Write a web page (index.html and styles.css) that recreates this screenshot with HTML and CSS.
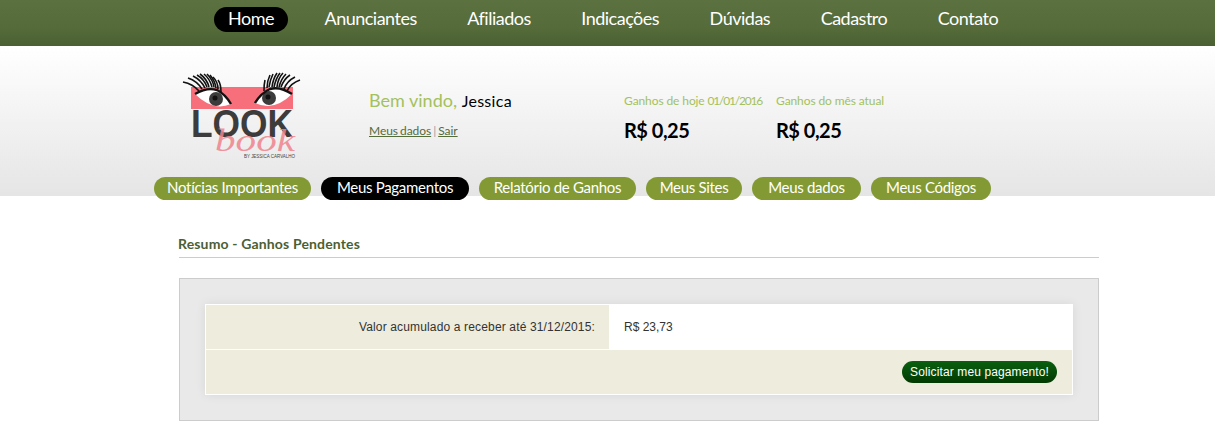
FILE: index.html
```html
<!DOCTYPE html>
<html lang="pt-BR">
<head>
    <meta charset="UTF-8">
    <title>Look Book - Meus Pagamentos</title>
    <link rel="stylesheet" href="styles.css">
</head>
<body>
    <nav class="top-nav">
        <a href="#" class="active">Home</a>
        <a href="#">Anunciantes</a>
        <a href="#">Afiliados</a>
        <a href="#">Indicações</a>
        <a href="#">Dúvidas</a>
        <a href="#">Cadastro</a>
        <a href="#">Contato</a>
    </nav>

    <header class="site-header">
        <div class="header-row">
            <svg class="logo" width="124" height="100" viewBox="0 0 124 100">
                <rect x="12" y="16" width="102" height="22" fill="#f76f7a"/>
                <!-- olhos -->
                <path d="M16 23 Q28 16 38 19 Q46 23 52 33 Q34 41 16 23Z" fill="#fff"/>
                <path d="M113 23 Q101 15 91 18 Q82 22 76 32 Q95 41 113 23Z" fill="#fff"/>
                <circle cx="37" cy="28" r="7" fill="#3c3c3c"/>
                <circle cx="90" cy="27" r="7" fill="#3c3c3c"/>
                <circle cx="36" cy="27" r="2.5" fill="#111"/>
                <circle cx="89" cy="26" r="2.5" fill="#111"/>
                <path d="M16 23 Q28 16 38 19 Q46 23 52 33" fill="none" stroke="#111" stroke-width="2.4"/>
                <path d="M113 23 Q101 15 91 18 Q82 22 76 32" fill="none" stroke="#111" stroke-width="2.4"/>
                <!-- cilios -->
                <g stroke="#111" stroke-width="1.6" fill="none">
                    <path d="M4 11 Q14 13 20 20"/><path d="M9 7 Q18 10 23 18"/><path d="M14 5 Q22 9 26 17"/><path d="M18 4 Q25 8 28 16"/><path d="M21 3 Q28 8 30 16"/><path d="M25 3 Q31 8 33 16"/><path d="M28 3 Q34 9 35 16"/><path d="M31 4 Q36 10 37 17"/><path d="M34 6 Q39 11 39 18"/><path d="M39 9 Q42 13 42 21"/>
                    <path d="M121 9 Q112 12 108 20"/><path d="M116 6 Q108 10 105 18"/><path d="M111 4 Q105 8 102 16"/><path d="M107 3 Q102 8 100 16"/><path d="M104 2 Q99 7 98 16"/><path d="M101 2 Q97 7 95 16"/><path d="M98 2 Q94 8 93 16"/><path d="M94 3 Q91 9 90 16"/><path d="M91 4 Q88 10 88 17"/><path d="M86 9 Q85 13 85 20"/>
                </g>
                <text x="12" y="66" class="logo-word" textLength="102" lengthAdjust="spacingAndGlyphs">LOOK</text>
                <text x="36" y="80" class="logo-script" textLength="80" lengthAdjust="spacingAndGlyphs">book</text>
                <text x="65" y="87" class="logo-by" textLength="51" lengthAdjust="spacingAndGlyphs">BY JESSICA CARVALHO</text>
            </svg>

            <div class="welcome">
                <p class="welcome-text">Bem vindo, <span>Jessica</span></p>
                <p class="welcome-links"><a href="#">Meus dados</a> | <a href="#">Sair</a></p>
            </div>

            <div class="earnings earnings-today">
                <p class="earnings-label">Ganhos de hoje <span class="earnings-date">01/01/2016</span></p>
                <p class="earnings-value">R$ 0,25</p>
            </div>
            <div class="earnings">
                <p class="earnings-label">Ganhos do mês atual</p>
                <p class="earnings-value">R$ 0,25</p>
            </div>
        </div>

        <div class="tabs">
            <a href="#">Notícias Importantes</a>
            <a href="#" class="active">Meus Pagamentos</a>
            <a href="#">Relatório de Ganhos</a>
            <a href="#">Meus Sites</a>
            <a href="#">Meus dados</a>
            <a href="#">Meus Códigos</a>
        </div>
    </header>

    <main class="content">
        <h2 class="section-title">Resumo - Ganhos Pendentes</h2>

        <div class="panel">
            <div class="summary">
                <div class="summary-row">
                    <div class="summary-label">Valor acumulado a receber até 31/12/2015:</div>
                    <div class="summary-value">R$ 23,73</div>
                </div>
                <div class="summary-action">
                    <button class="pay-btn">Solicitar meu pagamento!</button>
                </div>
            </div>
        </div>
    </main>
</body>
</html>
```

FILE: styles.css
```css
* {
    margin: 0;
    padding: 0;
    box-sizing: border-box;
}

body {
    font-family: Lato, "Open Sans", sans-serif;
    background: #fff;
    color: #000;
}

a {
    color: inherit;
}

.top-nav {
    height: 46px;
    padding: 7px 0 0 214px;
    display: flex;
    align-items: flex-start;
    gap: 22.5px;
    background: linear-gradient(to bottom, #5c7140 0%, #556b39 60%, #4b6033 100%);
}

.top-nav a {
    height: 25px;
    padding: 0 14px;
    line-height: 23px;
    border-radius: 13px;
    font-size: 18px;
    letter-spacing: -0.5px;
    color: #fff;
    text-decoration: none;
}

.top-nav a.active {
    background: #000;
}

.site-header {
    height: 150px;
    background: linear-gradient(to bottom, #fff 0%, #e5e5e5 100%);
}

.header-row {
    height: 131px;
    padding: 25px 0 0 179px;
    display: flex;
    align-items: flex-start;
}

.logo {
    width: 124px;
    height: 100px;
    flex-shrink: 0;
    overflow: visible;
}

.logo-word {
    font-family: "Liberation Sans", sans-serif;
    font-size: 39px;
    font-weight: bold;
    fill: #3c3c3c;
}

.logo-script {
    font-family: "Liberation Serif", serif;
    font-size: 32px;
    font-style: italic;
    fill: #f0828c;
    fill-opacity: 0.85;
}

.logo-by {
    font-family: "Liberation Sans", sans-serif;
    font-size: 5px;
    fill: #444;
}

.welcome {
    width: 255px;
    margin-left: 66px;
    padding-top: 18px;
}

.welcome-text {
    font-size: 18px;
    line-height: 22px;
    color: #a3c15c;
}

.welcome-text span {
    font-size: 16px;
    letter-spacing: 0.3px;
    color: #000;
}

.welcome-links {
    margin-top: 11px;
    font-size: 12px;
    letter-spacing: -0.05px;
    word-spacing: -1px;
    color: #a0a0a0;
}

.welcome-links a {
    color: #556b39;
}

.earnings {
    padding-top: 22px;
}

.earnings-today {
    width: 152px;
}

.earnings-label {
    font-size: 12px;
    letter-spacing: -0.1px;
    color: #a3c15c;
}

.earnings-date {
    letter-spacing: -1.2px;
}

.earnings-value {
    margin-top: 10px;
    font-size: 20px;
    letter-spacing: -0.5px;
    font-weight: bold;
}

.tabs {
    height: 23px;
    padding-left: 154px;
    display: grid;
    grid-template-columns: 157px 148px 157px 96px 109px 120px;
    gap: 10px;
}

.tabs a {
    line-height: 21px;
    border-radius: 12px;
    text-align: center;
    font-size: 15px;
    letter-spacing: -0.3px;
    color: #fff;
    background: #839a34;
    text-decoration: none;
    position: relative;
}

.tabs a.active {
    background: #000;
}

.content {
    margin-left: 179px;
    width: 920px;
    padding-top: 39px;
}

.section-title {
    height: 23px;
    margin-bottom: 20px;
    border-bottom: 1px solid #ccc;
    font-size: 14px;
    letter-spacing: 0.15px;
    font-weight: bold;
    color: #4a5f35;
    text-indent: -1px;
}

.panel {
    padding: 25px;
    height: 143px;
    background: #e9e9e9;
    border: 1px solid #ccc;
}

.summary {
    height: 91px;
    background: #eeecdc;
    border: 1px solid #fff;
    box-shadow: 0 0 10px rgba(0, 0, 0, 0.08);
}

.summary-row {
    height: 45px;
    display: flex;
    border-bottom: 1px solid #fff;
}

.summary-label {
    width: 403px;
    padding-right: 14px;
    text-align: right;
    line-height: 44px;
    font-family: "Liberation Sans", sans-serif;
    font-size: 12px;
    letter-spacing: 0.15px;
    color: #333;
}

.summary-value {
    flex: 1;
    padding-left: 15px;
    line-height: 44px;
    background: #fff;
    font-family: "Liberation Sans", sans-serif;
    font-size: 12px;
    color: #333;
}

.summary-action {
    display: flex;
    justify-content: flex-end;
    padding: 11px 15px 0 0;
}

.pay-btn {
    height: 22px;
    padding: 0 8px;
    border: 0;
    border-radius: 11px;
    background: linear-gradient(to bottom, #0a6010 0%, #023a02 100%);
    font-family: "Liberation Sans", sans-serif;
    font-size: 12px;
    letter-spacing: 0.12px;
    color: #fff;
    cursor: pointer;
}
```
